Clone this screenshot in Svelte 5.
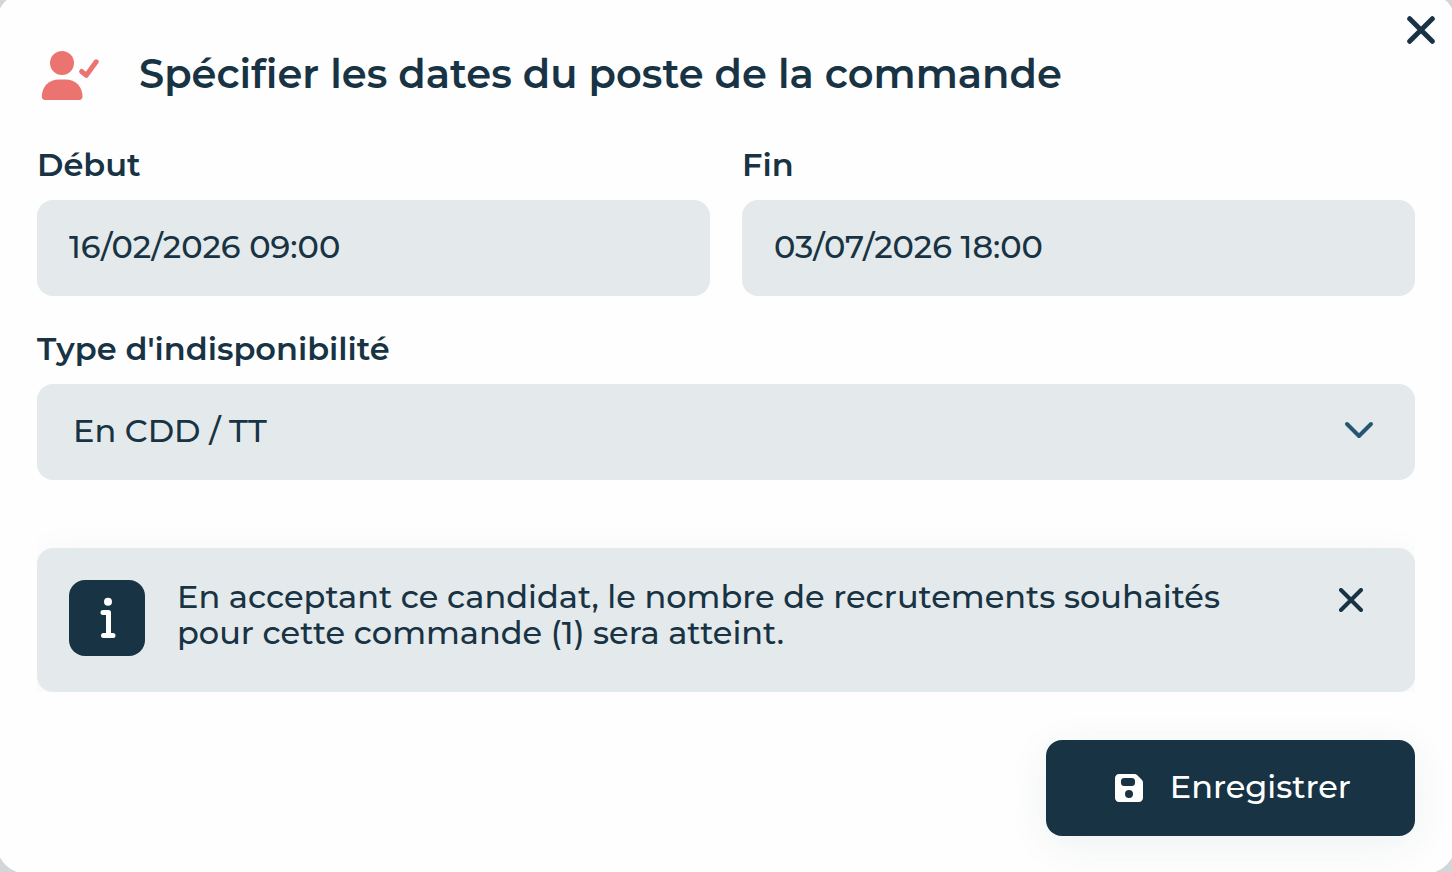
<script>
  let start = $state('16/02/2026 09:00');
  let end = $state('03/07/2026 18:00');
  let kind = $state('cdd');
  let open = $state(true);
  let notice = $state(true);
</script>

<div class="page">
  {#if open}
    <div class="modal" role="dialog" aria-labelledby="dialog-title">
      <button class="close" type="button" aria-label="Fermer" onclick={() => (open = false)}>
        <svg width="28" height="28" viewBox="0 0 28 28"><path d="M2.700 2.700 25.300 25.300M25.300 2.700 2.700 25.300" /></svg>
      </button>

      <header>
        <svg class="user" width="64" height="52" viewBox="0 0 64 52" aria-hidden="true">
          <circle cx="25" cy="13" r="12" />
          <path d="M4.800 46.800C4.800 36.400 12 29.500 22 29.500h6.500c10 0 17 6.900 17 17.300 0 1.800-1.300 3.200-3 3.200H7.800c-1.700 0-3-1.400-3-3.200Z" />
          <path class="tick" d="M44.600 21.500 49.300 25.400 59.200 11.800" />
        </svg>
        <h1 id="dialog-title">Spécifier les dates du poste de la commande</h1>
      </header>

      <form onsubmit={(e) => e.preventDefault()}>
        <div class="dates">
          <div class="field">
            <label for="start">Début</label>
            <input id="start" type="text" bind:value={start} />
          </div>
          <div class="field">
            <label for="end">Fin</label>
            <input id="end" type="text" bind:value={end} />
          </div>
        </div>

        <div class="field">
          <label for="kind">Type d'indisponibilité</label>
          <div class="select">
            <select id="kind" bind:value={kind}>
              <option value="cdd">En CDD / TT</option>
            </select>
            <svg width="30" height="18" viewBox="0 0 30 18" aria-hidden="true"><path d="M3 3 15 15 27 3" /></svg>
          </div>
        </div>

        {#if notice}
          <div class="notice-wrap">
            <div class="notice" role="status">
              <svg class="info" width="76" height="76" viewBox="0 0 76 76" aria-hidden="true">
                <rect width="76" height="76" rx="16" />
                <circle cx="39" cy="21.700" r="4" />
                <path d="M34 32.500h5.500V55.500M34.500 55.500h9.500" />
              </svg>
              <p>En acceptant ce candidat, le nombre de recrutements souhaités pour cette commande (1) sera atteint.</p>
              <button type="button" aria-label="Masquer le message" onclick={() => (notice = false)}>
                <svg width="24" height="24" viewBox="0 0 24 24"><path d="M2 2 22 22M22 2 2 22" /></svg>
              </button>
            </div>
          </div>
        {/if}

        <button class="save" type="submit">
          <svg width="28" height="28" viewBox="0 0 28 28" aria-hidden="true">
            <path fill-rule="evenodd" d="M4 0H19.500c1.100 0 2 .4 2.800 1.200l4.500 4.500C27.600 6.500 28 7.400 28 8.500V24c0 2.200-1.800 4-4 4H4c-2.200 0-4-1.800-4-4V4C0 1.800 1.800 0 4 0ZM9 4C7.300 4 6 5.300 6 7v2c0 1.700 1.300 3 3 3h8c1.700 0 3-1.300 3-3V7c0-1.700-1.300-3-3-3ZM14 16a4 4 0 1 0 0 8 4 4 0 0 0 0-8Z" />
          </svg>
          <span>Enregistrer</span>
        </button>
      </form>
    </div>
  {/if}
</div>

<style>
  :global(body) {
    background: #d2d6d8;
  }

  .page {
    min-height: 100vh;
    overflow: hidden;
    color: #183344;
    font-family: Montserrat, Inter, sans-serif;
    font-size: 32px;
    font-weight: 500;
  }

  .modal {
    position: relative;
    box-sizing: border-box;
    margin: -8px -4px -2px;
    padding: 52px 41px 38px;
    border-radius: 32px;
    background: #fefefe;
  }

  button,
  input,
  select {
    font: inherit;
    color: inherit;
    border: 0;
  }

  button {
    padding: 0;
    background: none;
    cursor: pointer;
  }

  svg {
    display: block;
    flex: none;
  }

  .close {
    position: absolute;
    top: 24px;
    right: 21px;
  }

  .close path,
  .notice button path,
  .select path {
    fill: none;
    stroke: #183344;
    stroke-width: 4;
    stroke-linecap: round;
    stroke-linejoin: round;
  }

  .close path {
    stroke-width: 5;
  }

  header {
    display: flex;
    align-items: flex-end;
    gap: 38px;
    height: 60px;
  }

  .user {
    margin-bottom: 2px;
    fill: #ec7470;
  }

  .user .tick {
    fill: none;
    stroke: #ec7470;
    stroke-width: 5;
    stroke-linecap: round;
    stroke-linejoin: round;
  }

  h1 {
    margin: 0;
    font-size: 40px;
    font-weight: 600;
    line-height: 60px;
  }

  form {
    display: flex;
    flex-direction: column;
    margin-top: 40px;
  }

  .dates {
    display: grid;
    grid-template-columns: 1fr 1fr;
    gap: 32px;
    margin-bottom: 32px;
  }

  .field {
    display: flex;
    flex-direction: column;
    gap: 14px;
    min-width: 0;
  }

  label {
    font-weight: 600;
    line-height: 42px;
  }

  input,
  select {
    box-sizing: border-box;
    width: 100%;
    height: 96px;
    padding: 0 32px 4px;
    border-radius: 16px;
    background: #e4e9eb;
  }

  .select {
    display: grid;
    align-items: center;
  }

  .select > * {
    grid-area: 1 / 1;
  }

  .select svg {
    justify-self: end;
    margin: 0 41px 4px 0;
    pointer-events: none;
  }

  .select path {
    stroke: #265672;
  }

  select {
    appearance: none;
    padding: 0 96px 4px 36px;
  }

  .notice-wrap {
    margin-top: 36px;
    padding-top: 32px;
    overflow: hidden;
  }

  .notice {
    display: flex;
    align-items: flex-start;
    box-sizing: border-box;
    min-height: 144px;
    padding: 32px 52px 32px 32px;
    border-radius: 16px;
    background: #e4e9eb;
    box-shadow: 0 8px 40px rgba(24, 51, 68, 0.05);
  }

  .info {
    fill: #183344;
  }

  .info circle {
    fill: #fff;
  }

  .info path {
    fill: none;
    stroke: #fff;
    stroke-width: 5;
    stroke-linecap: round;
    stroke-linejoin: round;
  }

  p {
    flex: 1;
    margin: -1px 80px 0 32px;
    line-height: 36px;
  }

  .notice button {
    margin-top: 8px;
  }

  .save {
    display: flex;
    align-items: center;
    align-self: flex-end;
    gap: 27px;
    height: 96px;
    margin-top: 48px;
    padding: 0 64px 0 69px;
    border-radius: 16px;
    background: #183344;
    color: #fff;
    box-shadow: 0 8px 40px rgba(24, 51, 68, 0.07);
  }

  .save span {
    padding-bottom: 4px;
  }

  .save svg {
    fill: #fff;
  }
</style>
